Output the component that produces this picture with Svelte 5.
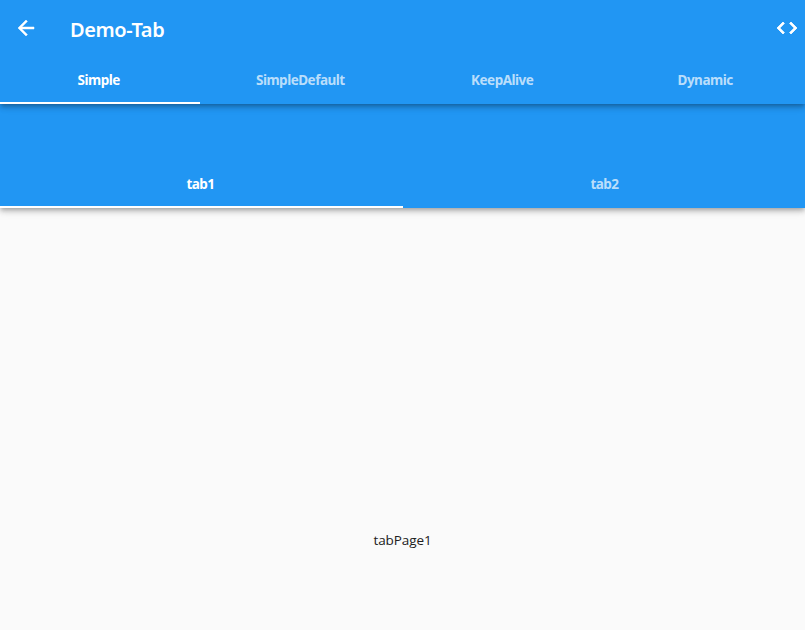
<script>
  const tabs = ['Simple', 'SimpleDefault', 'KeepAlive', 'Dynamic'];
  const inner = ['tab1', 'tab2'];
  let active = $state(0);
  let innerActive = $state(0);
</script>

<div class="screen">
  <header class="bar main">
    <div class="toolbar">
      <button class="back" aria-label="Back">
        <svg width="24" height="24" viewBox="0 0 24 24"><path d="M20 11H7.83l5.59-5.59L12 4l-8 8 8 8 1.41-1.41L7.83 13H20v-2z" /></svg>
      </button>
      <h1>Demo-Tab</h1>
      <button class="code" aria-label="Source code">
        <svg width="24" height="24" viewBox="0 0 24 24"><path d="M9.4 16.6L4.8 12l4.6-4.6L8 6l-6 6 6 6 1.4-1.4zm5.2 0l4.6-4.6-4.6-4.6L16 6l6 6-6 6-1.4-1.4z" /></svg>
      </button>
    </div>
    <nav>
      {#each tabs as t, i}
        <button class="tab" class:on={active === i} onclick={() => (active = i)}>{t}</button>
      {/each}
    </nav>
  </header>
  <section class="bar inner">
    <nav>
      {#each inner as t, i}
        <button class="tab" class:on={innerActive === i} onclick={() => (innerActive = i)}>{t}</button>
      {/each}
    </nav>
  </section>
  <main>tabPage{innerActive + 1}</main>
</div>

<style>
  .screen {
    width: 100%;
    height: 630px;
    display: flex;
    flex-direction: column;
    overflow: hidden;
    background: #fafafa;
    font-family: "Noto Sans", "Open Sans", sans-serif;
  }
  button { box-sizing: border-box; border: 0; padding: 0; background: none; font: inherit; cursor: pointer; }
  .bar {
    flex: none;
    height: 104px;
    position: relative;
    display: flex;
    flex-direction: column;
    justify-content: flex-end;
    background: #2196f3;
    box-shadow: 0 2px 4px -1px rgba(0,0,0,.2), 0 4px 5px rgba(0,0,0,.14), 0 1px 10px rgba(0,0,0,.12);
  }
  .main { z-index: 2; }
  .inner { z-index: 1; }
  .toolbar { height: 56px; display: flex; align-items: center; color: #fff; }
  .back { width: 24px; height: 24px; margin-left: 14px; }
  .code { width: 24px; height: 24px; margin: 0 6px 0 auto; }
  svg { display: block; }
  path { fill: #fff; stroke: #fff; stroke-width: .5; }
  .code path { stroke-width: .8; }
  h1 { margin: 4px 0 0 32px; font-size: 20px; line-height: 26px; font-weight: 600; letter-spacing: -.4px; }
  nav { display: flex; height: 48px; }
  .tab {
    flex: 1 1 0;
    height: 48px;
    padding-top: 1px;
    color: rgba(255,255,255,.7);
    border-bottom: 2px solid transparent;
    font-size: 13.5px;
    font-weight: 700;
    letter-spacing: -.5px;
  }
  .main .tab:first-child { flex: 0 0 200.4px; padding-right: 3px; }
  .main .tab:nth-child(3) { padding-left: 2px; }
  .main .tab:last-child { padding-left: 3px; }
  .inner .tab:first-child { padding-right: 2px; }
  .inner .tab:last-child { padding-left: 1px; }
  .tab.on { color: #fff; border-color: #fff; }
  main {
    flex: 1;
    display: flex;
    align-items: center;
    justify-content: center;
    padding-top: 242px;
    font-family: "Open Sans", "Noto Sans", sans-serif;
    font-size: 13.5px;
    letter-spacing: -.1px;
    color: #212121;
  }
</style>
